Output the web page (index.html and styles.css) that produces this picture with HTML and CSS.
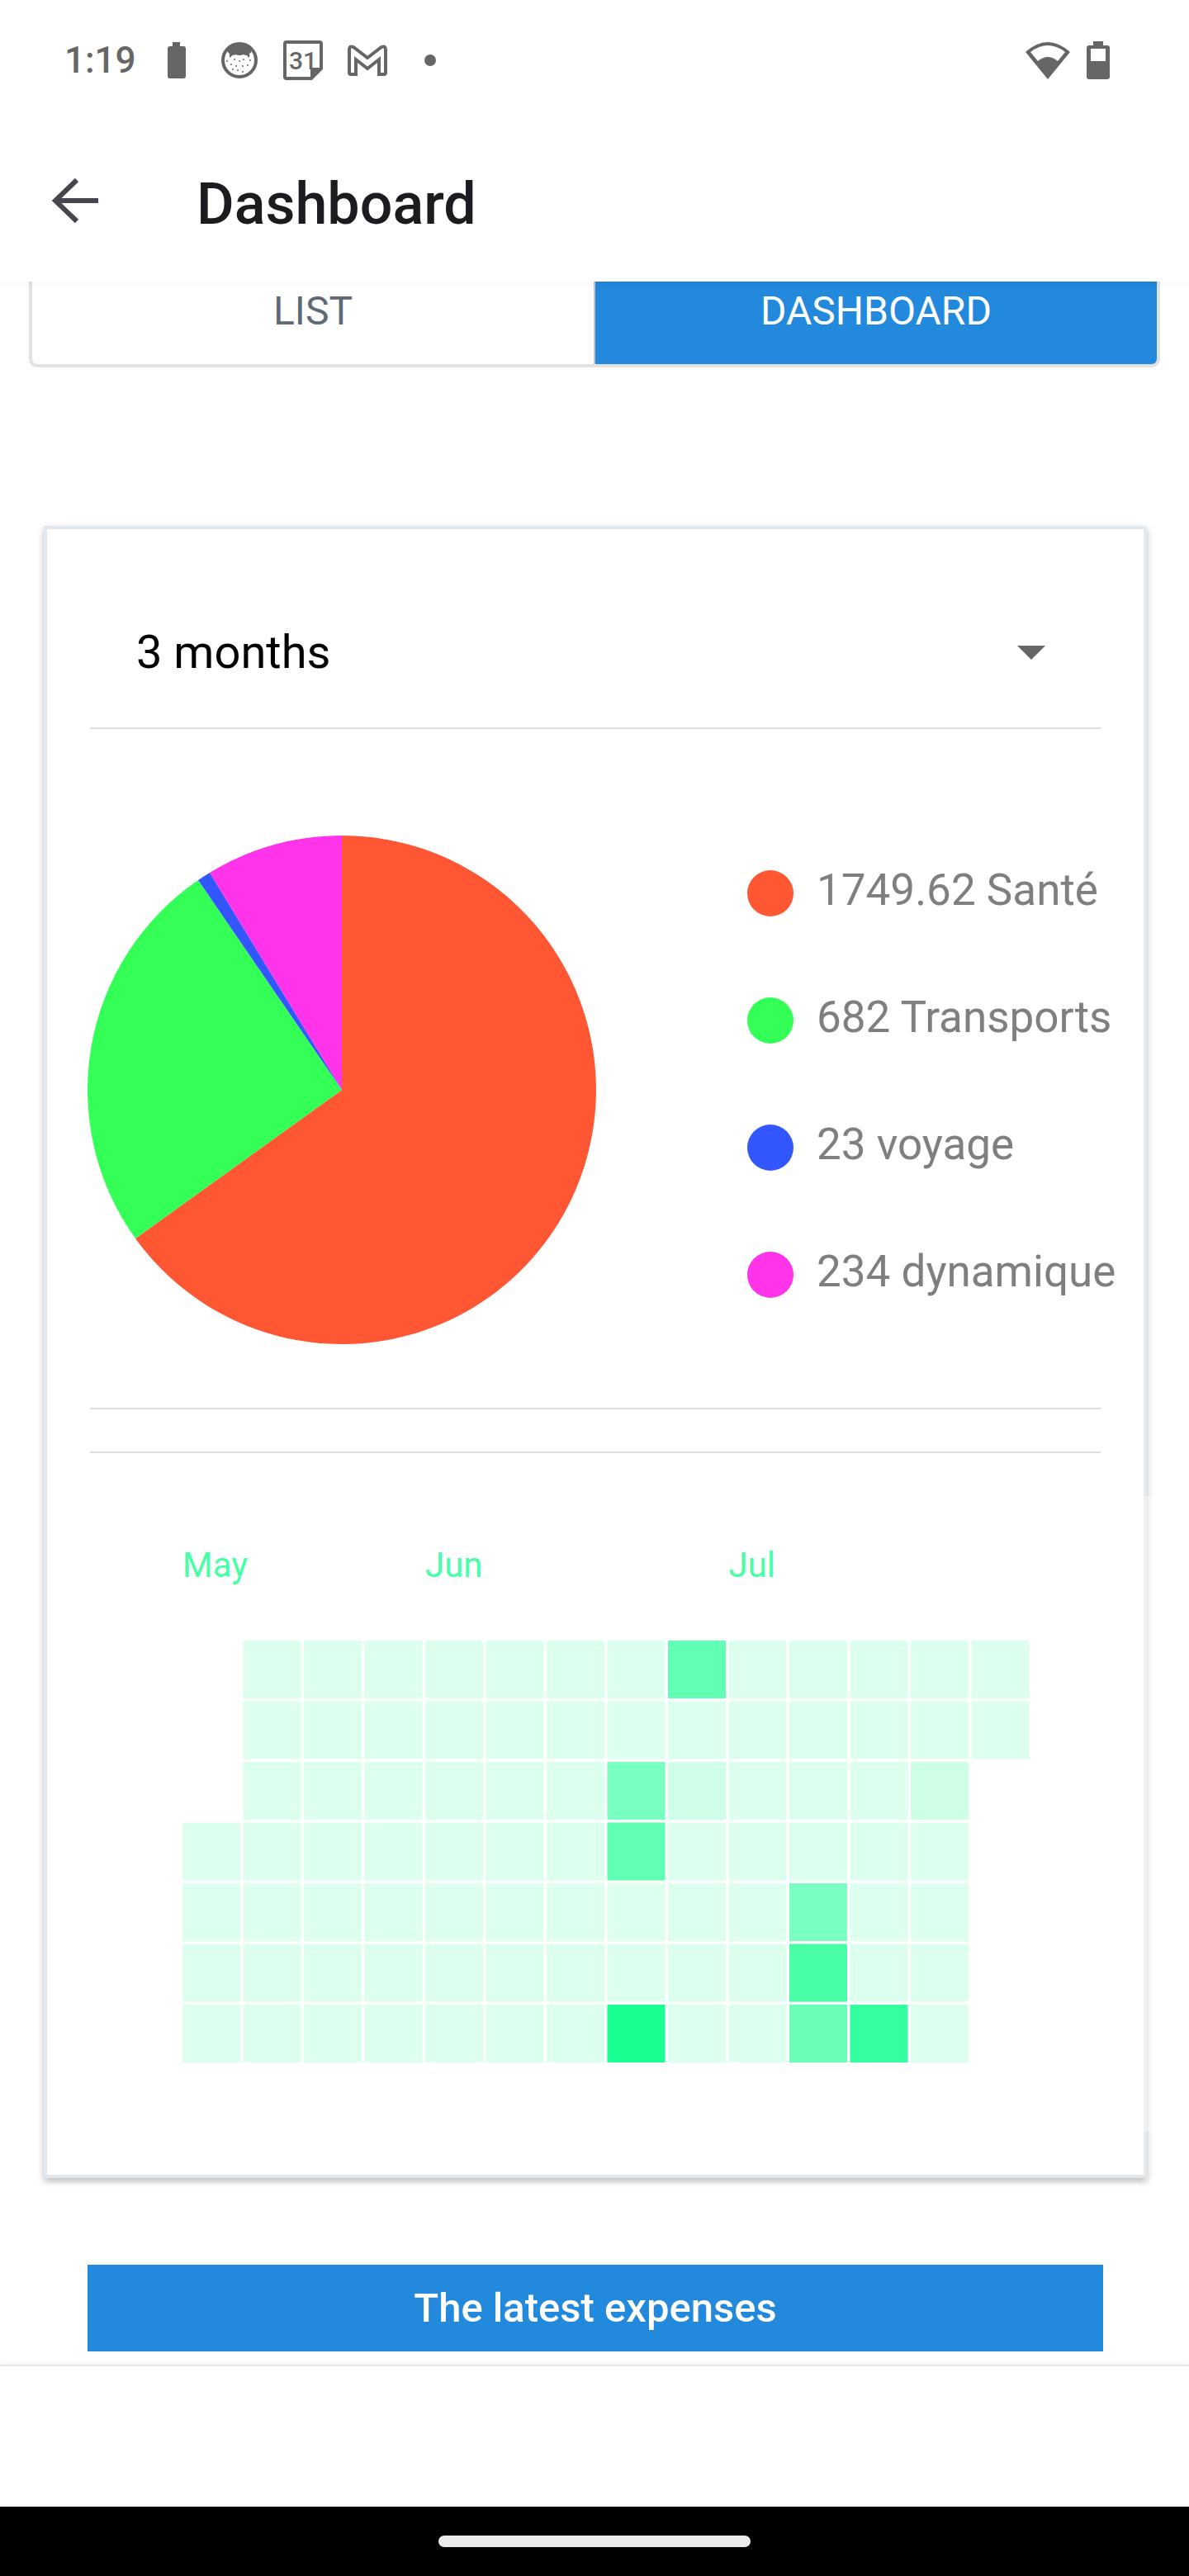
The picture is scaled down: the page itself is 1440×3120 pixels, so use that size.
FILE: index.html
```html
<!DOCTYPE html>
<html lang="en">
<head>
  <meta charset="utf-8">
  <meta name="viewport" content="width=device-width, initial-scale=1">
  <title>Dashboard</title>
  <link rel="stylesheet" href="styles.css">
</head>
<body>
  <div class="status-bar">
    <div class="status-left">
      <span class="clock">1:19</span>
      <svg class="icon-battery-full" width="24" height="48" viewBox="0 0 24 48" aria-hidden="true">
        <path d="M7 2h9v5h4q3 0 3 3v33q0 3-3 3H4q-3 0-3-3V10q0-3 3-3h3z" fill="currentColor"/>
      </svg>
      <svg width="48" height="48" viewBox="0 0 48 48" aria-hidden="true">
        <circle cx="24" cy="24" r="20" fill="none" stroke="currentColor" stroke-width="4"/>
        <path d="M6 18Q11 4 24 4T42 18L39 12q-1 3-3 4 1 3-1 5l-2-3q-3 0-4-1-5 2-10 0-1 1-4 1l-2 3q-2-2-1-5-2-1-3-4z" fill="currentColor"/>
        <g fill="currentColor">
          <circle cx="14" cy="29" r="1"/><circle cx="18" cy="23" r="1"/><circle cx="29" cy="23" r="1"/>
          <circle cx="24" cy="25" r="1"/><circle cx="20" cy="31" r="1"/><circle cx="28" cy="31" r="1"/>
          <circle cx="34" cy="30" r="1"/><circle cx="22" cy="36" r="1"/><circle cx="28" cy="38" r="1"/>
          <circle cx="9" cy="25" r="1"/><circle cx="37" cy="24" r="1"/><circle cx="16" cy="35" r="1"/>
        </g>
      </svg>
      <svg width="50" height="50" viewBox="0 0 50 50" aria-hidden="true">
        <path d="M5 3h40q2 0 2 2v30L35 47H5q-2 0-2-2V5q0-2 2-2z" fill="none" stroke="currentColor" stroke-width="4"/>
        <path d="M47 34v2L36 47h-2V37q0-3 3-3z" fill="currentColor"/>
        <text class="calendar-day" x="25" y="36" text-anchor="middle">31</text>
      </svg>
      <svg width="50" height="40" viewBox="0 0 50 40" aria-hidden="true">
        <path d="M11 37H5q-2 0-2-2V7q0-5 5-3l17 13L42 4q5-2 5 3v28q0 2-2 2h-6V19L25 30 11 19z" fill="none" stroke="currentColor" stroke-width="4"/>
      </svg>
      <span class="more-dot"></span>
    </div>
    <div class="status-right">
      <svg width="54" height="46" viewBox="0 0 54 46" aria-hidden="true">
        <path d="M0 13Q27-11 54 13L27 46zM6 13l9 11q12-10 24 0l9-11Q27-3 6 13z" fill="currentColor" fill-rule="evenodd"/>
      </svg>
      <svg width="28" height="46" viewBox="0 0 28 46" aria-hidden="true">
        <path d="M8 0h12v5h5q3 0 3 3v35q0 3-3 3H3q-3 0-3-3V8q0-3 3-3h5zM5 9v15h18V9z" fill="currentColor" fill-rule="evenodd"/>
      </svg>
    </div>
  </div>

  <header class="app-bar">
    <button class="back-button" type="button" aria-label="Back">
      <svg width="58" height="64" viewBox="0 0 58 64" aria-hidden="true">
        <path d="M57 28H6M31 3L5 28l26 25" fill="none" stroke="currentColor" stroke-width="6"/>
      </svg>
    </button>
    <h1 class="app-title">Dashboard</h1>
  </header>

  <main class="content">
    <div class="segments">
      <button class="segment" type="button">LIST</button>
      <button class="segment segment-active" type="button" aria-pressed="true">DASHBOARD</button>
    </div>

    <section class="card">
      <div class="period">
        <select class="period-select" aria-label="Period">
          <option>3 months</option>
        </select>
        <svg class="period-arrow" width="34" height="17" viewBox="0 0 34 17" aria-hidden="true">
          <path d="M0 0h34L17 17z" fill="currentColor"/>
        </svg>
      </div>

      <div class="breakdown">
        <svg class="pie" viewBox="0 0 616 616" role="img" aria-label="Expenses by category">
          <path class="sante" d="M308 308V0A308 308 0 1 1 58 488z"/>
          <path class="transports" d="M308 308L58 488A308 308 0 0 1 134 54z"/>
          <path class="voyage" d="M308 308L134 54A308 308 0 0 1 148 45z"/>
          <path class="dynamique" d="M308 308L148 45A308 308 0 0 1 308 0z"/>
        </svg>
        <ul class="legend">
          <li class="legend-item"><span class="dot dot-sante"></span>1749.62 Santé</li>
          <li class="legend-item"><span class="dot dot-transports"></span>682 Transports</li>
          <li class="legend-item"><span class="dot dot-voyage"></span>23 voyage</li>
          <li class="legend-item"><span class="dot dot-dynamique"></span>234 dynamique</li>
        </ul>
      </div>

      <div class="divider"></div>

      <div class="activity">
        <svg class="heatmap" viewBox="0 0 294 180" role="img" aria-label="Expenses per day">
          <defs>
            <g id="week">
              <rect width="20" height="20"/>
              <rect y="21" width="20" height="20"/>
              <rect y="42" width="20" height="20"/>
              <rect y="63" width="20" height="20"/>
              <rect y="84" width="20" height="20"/>
              <rect y="105" width="20" height="20"/>
              <rect y="126" width="20" height="20"/>
            </g>
          </defs>
          <g class="month">
            <text x="0" y="12">May</text>
            <text x="84" y="12">Jun</text>
            <text x="189" y="12">Jul</text>
          </g>
          <g transform="translate(0 34)">
            <g class="idle">
              <rect y="63" width="20" height="20"/>
              <rect y="84" width="20" height="20"/>
              <rect y="105" width="20" height="20"/>
              <rect y="126" width="20" height="20"/>
              <use href="#week" x="21"/>
              <use href="#week" x="42"/>
              <use href="#week" x="63"/>
              <use href="#week" x="84"/>
              <use href="#week" x="105"/>
              <use href="#week" x="126"/>
              <use href="#week" x="147"/>
              <use href="#week" x="168"/>
              <use href="#week" x="189"/>
              <use href="#week" x="210"/>
              <use href="#week" x="231"/>
              <use href="#week" x="252"/>
              <rect x="273" width="20" height="20"/>
              <rect x="273" y="21" width="20" height="20"/>
            </g>
            <rect x="147" y="42" width="20" height="20" fill="#79ffc0"/>
            <rect x="147" y="63" width="20" height="20" fill="#60ffb4"/>
            <rect x="147" y="126" width="20" height="20" fill="#1aff92"/>
            <rect x="168" y="0" width="20" height="20" fill="#60ffb4"/>
            <rect x="168" y="42" width="20" height="20" fill="#d0ffe9"/>
            <rect x="210" y="84" width="20" height="20" fill="#79ffc0"/>
            <rect x="210" y="105" width="20" height="20" fill="#48ffa8"/>
            <rect x="210" y="126" width="20" height="20" fill="#69ffb8"/>
            <rect x="231" y="126" width="20" height="20" fill="#33ffa0"/>
            <rect x="252" y="42" width="20" height="20" fill="#ccffe6"/>
          </g>
        </svg>
      </div>
    </section>

    <button class="latest-button" type="button">The latest expenses</button>
  </main>

  <footer class="tab-bar"></footer>
  <div class="gesture-bar"><span class="gesture-pill"></span></div>
</body>
</html>
```
FILE: styles.css
```css
* {
  box-sizing: border-box;
}

body {
  margin: 0;
  min-height: 100vh;
  display: flex;
  flex-direction: column;
  background: #fff;
  font-family: Roboto, "Liberation Sans", sans-serif;
}

button,
select {
  margin: 0;
  padding: 0;
  border: 0;
  border-radius: 0;
  background: none;
  font-family: inherit;
}

svg {
  display: block;
  flex: none;
}

/* Status bar */
.status-bar {
  height: 146px;
  padding: 0 96px 0 78px;
  display: flex;
  align-items: center;
  justify-content: space-between;
  position: relative;
  z-index: 1;
  background: #fff;
  color: #666;
}

.status-left,
.status-right {
  display: flex;
  align-items: center;
}

.status-left {
  gap: 28px;
}

.status-right {
  gap: 20px;
}

.clock {
  width: 96px;
  font-size: 44px;
  line-height: 56px;
  font-weight: 500;
}

.icon-battery-full {
  margin-right: 12px;
}

.calendar-day {
  font-size: 30px;
  font-weight: 500;
  fill: currentColor;
}

.more-dot {
  width: 14px;
  height: 14px;
  margin-left: 16px;
  border-radius: 50%;
  background: currentColor;
}

/* App bar */
.app-bar {
  height: 195px;
  padding: 6px 62px 0;
  display: flex;
  align-items: center;
  gap: 118px;
  position: relative;
  background: #fff;
  box-shadow: 0 2px 12px rgba(0, 0, 0, 0.05);
}

.back-button {
  color: #49454f;
}

.app-title {
  margin: 0;
  font-size: 70px;
  line-height: 84px;
  font-weight: 500;
  color: #1c1b1f;
}

/* Segmented control */
.content {
  flex: 1;
}

.segments {
  margin: 0 35px 192px;
  display: flex;
  border: 4px solid #e2e2e2;
  border-top: 0;
  border-radius: 0 0 10px 10px;
  overflow: hidden;
}

.segment {
  flex: 1;
  padding: 8px 0 36px;
  border-right: 2px solid #bdc6cf;
  font-size: 48px;
  line-height: 56px;
  color: #5e6977;
}

.segment-active {
  border-right: 0;
  background: #2289dc;
  color: #fff;
}

/* Card */
.card {
  margin: 0 51px 105px 53px;
  padding: 58px 0 52px;
  border: 4px solid #e1e8ee;
  box-shadow: 0 4px 8px rgba(0, 0, 0, 0.28);
}

.period {
  margin: 0 52px 129px;
  display: flex;
  align-items: center;
  position: relative;
  border-bottom: 2px solid #dedede;
}

.period-select {
  flex: 1;
  height: 182px;
  padding: 0 56px;
  appearance: none;
  font-size: 56px;
  color: #000;
}

.period-arrow {
  position: absolute;
  right: 67px;
  color: #666;
  pointer-events: none;
}

.breakdown {
  margin: 0 0 77px 49px;
  display: flex;
  gap: 183px;
}

.pie {
  width: 616px;
  height: 616px;
}

.sante { fill: #ff5733; }
.transports { fill: #33ff57; }
.voyage { fill: #3357ff; }
.dynamique { fill: #ff33e9; }

.legend {
  margin: 0;
  padding: 0;
  display: grid;
  grid-auto-rows: 154px;
  list-style: none;
}

.legend-item {
  padding-bottom: 22px;
  display: flex;
  align-items: center;
  gap: 28px;
  font-size: 53px;
  white-space: nowrap;
  color: #7f7f7f;
}

.dot {
  width: 56px;
  height: 56px;
  margin-top: 8px;
  border-radius: 50%;
}

.dot-sante { background: #ff5733; }
.dot-transports { background: #33ff57; }
.dot-voyage { background: #3357ff; }
.dot-dynamique { background: #ff33e9; }

.divider {
  height: 55px;
  margin: 0 52px 52px;
  border: 2px solid #dedede;
  border-width: 2px 0;
}

/* Translucent panel that runs out over the card's right edge */
.activity {
  margin-right: -16px;
  padding: 56px 0 84px 164px;
  background: rgba(255, 255, 255, 0.4);
}

.heatmap {
  width: 100%;
  max-width: 1029px;
}

.month {
  font-size: 12px;
  fill: #48ffa8;
}

.idle {
  fill: #dcffee;
}

.latest-button {
  display: block;
  width: calc(100% - 210px);
  height: 105px;
  margin: 0 auto 16px 106px;
  background: #2289dc;
  font-size: 49px;
  font-weight: 500;
  color: #fff;
}

/* Bottom bars */
.tab-bar {
  height: 172px;
  border-top: 2px solid #e6e6e6;
  background: #fff;
  box-shadow: 0 -2px 10px rgba(0, 0, 0, 0.05);
}

.gesture-bar {
  height: 84px;
  display: flex;
  align-items: center;
  justify-content: center;
  background: #000;
}

.gesture-pill {
  width: 378px;
  height: 14px;
  border-radius: 7px;
  background: #ebebeb;
}
```
